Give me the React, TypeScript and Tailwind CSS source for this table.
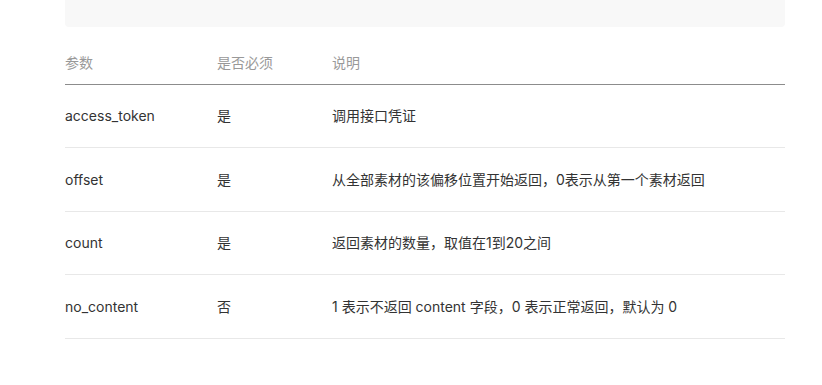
const rows = [
  { name: "access_token", req: "是", desc: "调用接口凭证" },
  { name: "offset", req: "是", desc: "从全部素材的该偏移位置开始返回，0表示从第一个素材返回" },
  { name: "count", req: "是", desc: "返回素材的数量，取值在1到20之间" },
  { name: "no_content", req: "否", desc: "1 表示不返回 content 字段，0 表示正常返回，默认为 0" },
];

export default function App() {
  return (
    <div
      className="w-[822px] h-[385px] bg-white overflow-hidden"
      style={{ fontFamily: 'Inter, "Noto Sans CJK SC", sans-serif' }}
    >
      <div className="ml-[65px] w-[720px]">
        <div className="h-[27px] bg-[#f8f8f8] rounded-b-[4px]" />
        <table className="mt-[15px] w-full border-collapse text-[14px]">
          <thead>
            <tr className="h-[42px] border-b border-[#8c8c8c] text-[#999]">
              <th className="w-[152px] text-left font-normal p-0">参数</th>
              <th className="w-[115px] text-left font-normal p-0">是否必须</th>
              <th className="text-left font-normal p-0">说明</th>
            </tr>
          </thead>
          <tbody className="text-[#333]">
            {rows.map(r => (
              <tr key={r.name} className="h-[63.5px] border-b border-[#e8e8e8]">
                <td className="p-0">{r.name}</td>
                <td className="p-0">{r.req}</td>
                <td className="p-0">{r.desc}</td>
              </tr>
            ))}
          </tbody>
        </table>
      </div>
    </div>
  );
}
